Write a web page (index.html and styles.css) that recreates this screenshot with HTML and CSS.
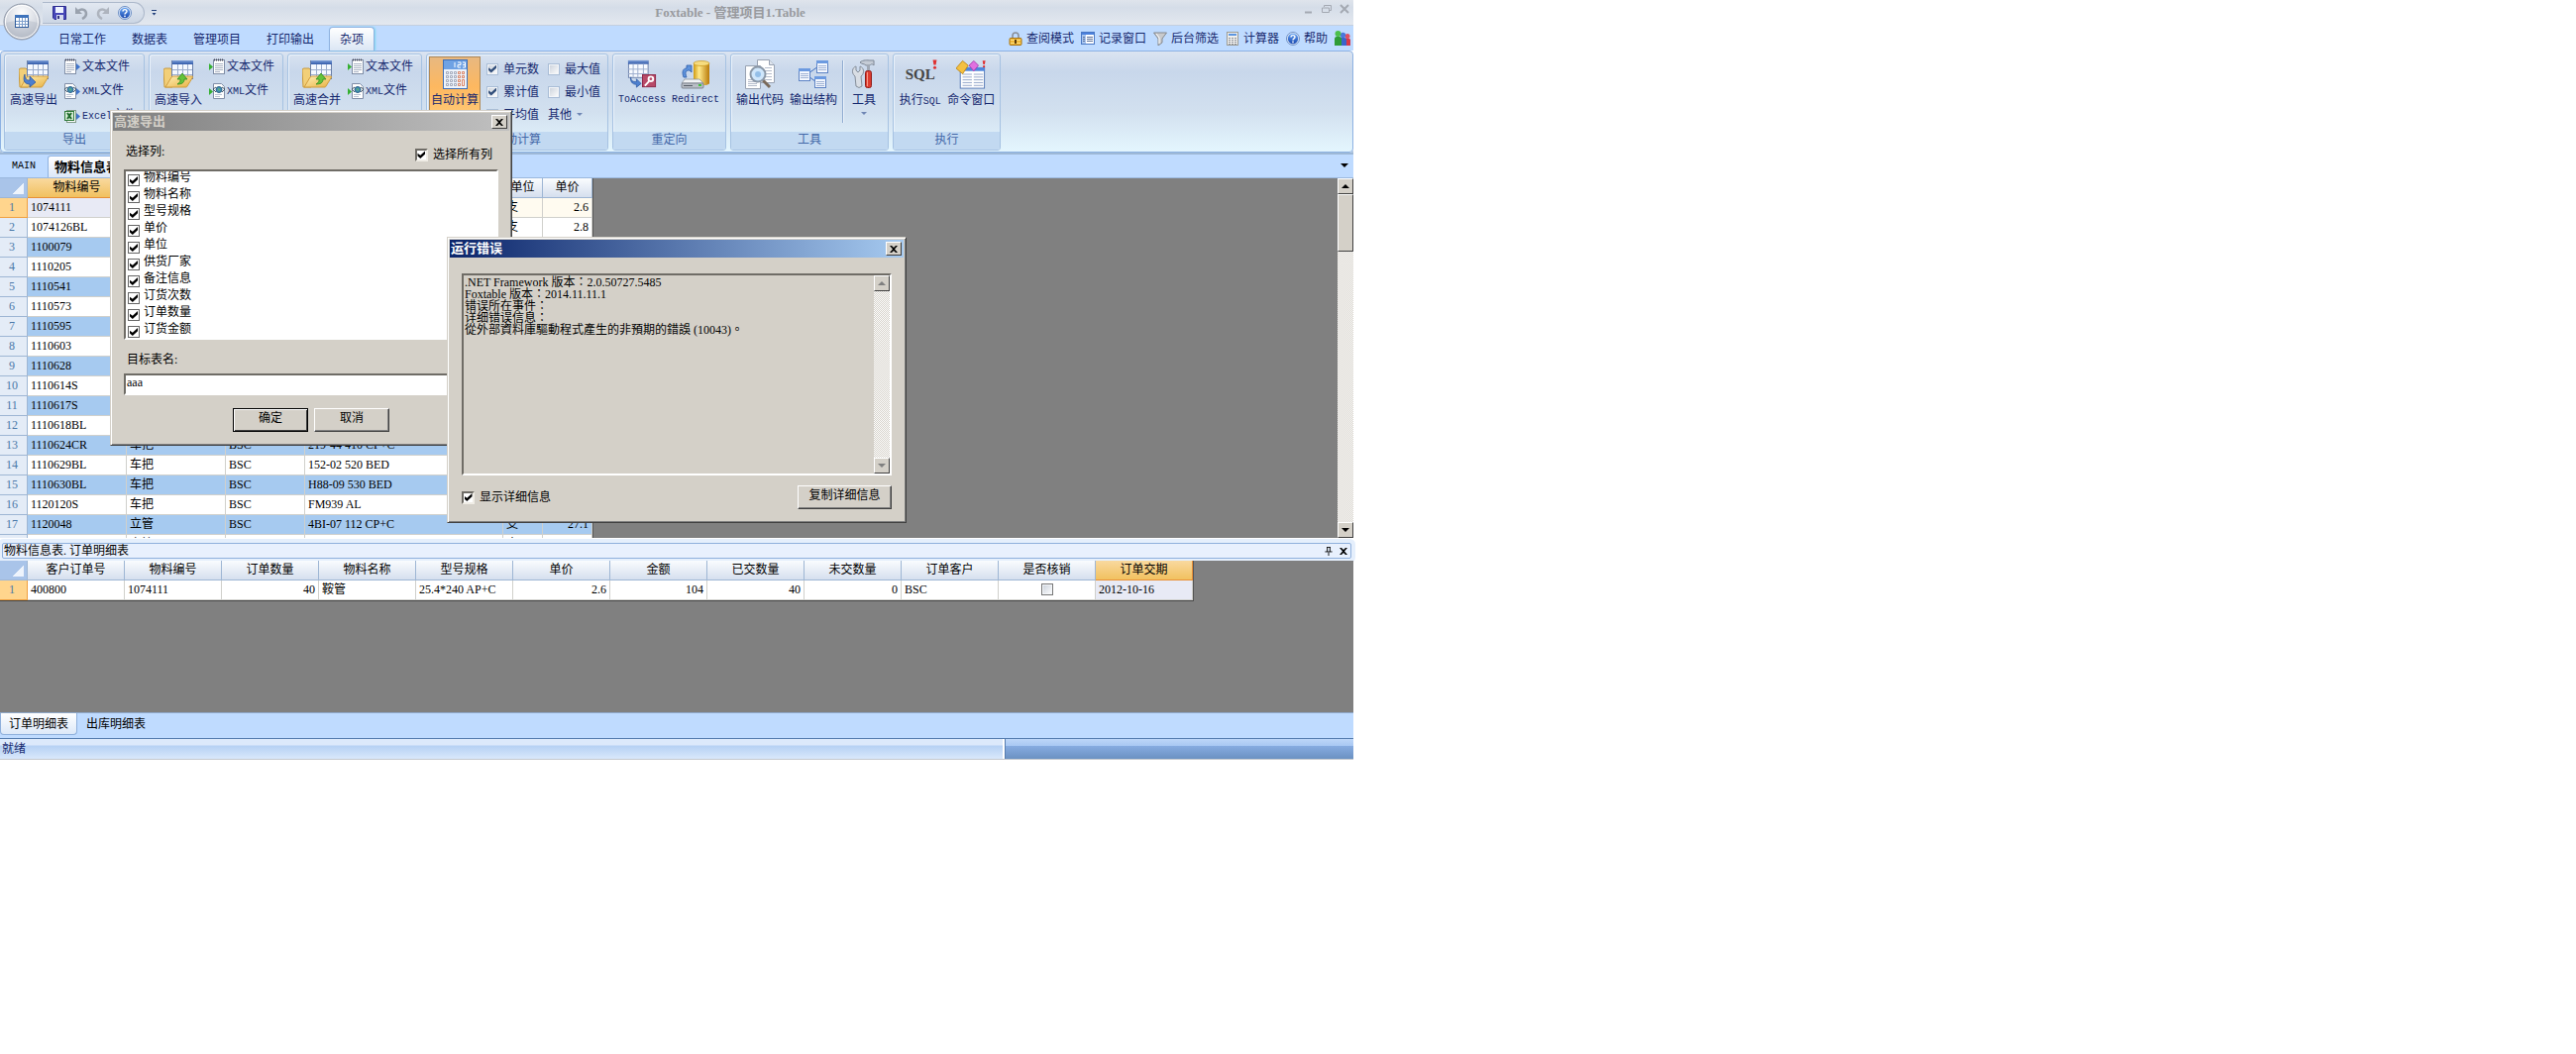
FILE: index.html
```html
<!DOCTYPE html>
<html lang="zh-CN">
<head>
<meta charset="utf-8">
<title>Foxtable - 管理项目1.Table</title>
<link rel="stylesheet" href="styles.css">
</head>
<body>
<svg class="defs" aria-hidden="true">
  <defs>
    <linearGradient id="g-blue" x2="0" y2="1"><stop offset="0" stop-color="#7d9fd8"/><stop offset="1" stop-color="#2f58a8"/></linearGradient>
    <linearGradient id="g-gold" x2="1" y2="1"><stop offset="0" stop-color="#fff0b8"/><stop offset="1" stop-color="#e8b040"/></linearGradient>
    <linearGradient id="g-cyl" x2="1" y2="0"><stop offset="0" stop-color="#d09a10"/><stop offset=".35" stop-color="#ffe98a"/><stop offset="1" stop-color="#b97a08"/></linearGradient>
    <radialGradient id="g-orb" cx=".5" cy=".25" r=".8"><stop offset="0" stop-color="#ffffff"/><stop offset=".6" stop-color="#d4d8e0"/><stop offset="1" stop-color="#a8aeba"/></radialGradient>
    <linearGradient id="g-help" x2="0" y2="1"><stop offset="0" stop-color="#6aa6f2"/><stop offset="1" stop-color="#1848b0"/></linearGradient>
  </defs>
  <symbol id="i-folder" viewBox="0 0 30 30">
    <path d="M0 11q0-2 2-2h5l2 2v17H1z" fill="#f2cf78" stroke="#c99a3c"/>
    <rect x="8.500" y="1.500" width="21" height="18" fill="#f4f8ff" stroke="#6a7fa8"/>
    <rect x="9" y="1" width="21" height="4" fill="url(#g-blue)"/>
    <path d="M9 10.500h20M9 15.500h20M14.500 5v14M19.500 5v14M24.500 5v14" stroke="#9aaccc"/>
    <path d="M2 28l6-10q1-1 2-1h19q1 0 .500 1L24 27q-.500 1-1 1z" fill="url(#g-gold)" stroke="#d09c3c"/>
  </symbol>
  <symbol id="i-out" viewBox="0 0 30 30"><use href="#i-folder"/><path d="M6 15c0 6 3 6 5 6v-4l6 6-6 5v-3c-6 0-7-5-5-10z" fill="#4d80cf" stroke="#234f9c" stroke-width=".7"/></symbol>
  <symbol id="i-in" viewBox="0 0 30 30"><use href="#i-folder"/><path d="M19 14l5 6h-3c0 4-3 5-7 5 3-2 3-3 3-5h-3z" fill="#63c23a" stroke="#2c8a1c" stroke-width=".8"/></symbol>
  <symbol id="i-note" viewBox="0 0 12 16"><rect x=".5" y="1.500" width="11" height="14" fill="#fff" stroke="#7f8da6"/><path d="M1 1.500h10" stroke="#445" stroke-width="2" stroke-dasharray="1 1"/><path d="M2 5.500h8M2 7.500h8M2 9.500h8M2 11.500h8M2 13.500h5" stroke="#a9b3c4"/></symbol>
  <symbol id="i-xdoc" viewBox="0 0 12 16"><path d="M.500.500h8l3 3v12H.500z" fill="#fff" stroke="#7f8da6"/><path d="M0 6l3-2M0 6l3 3M12 6l-3-2M12 6l-3 3" stroke="#456"/><circle cx="6" cy="6.500" r="3" fill="#3f8fb0" stroke="#2c5f88"/><path d="M5 5l2 1-1 2" fill="#6fc05a"/><path d="M2 11.500h7M2 13.500h5" stroke="#b9c2d2"/></symbol>
  <symbol id="i-xls" viewBox="0 0 12 16"><rect x="2.500" y="2.500" width="9" height="12" fill="#fff" stroke="#7f9a86"/><rect x=".5" y="3.500" width="9" height="9" fill="#d8ecd8" stroke="#2f7a3a"/><path d="M3 5l4 6M7 5l-4 6" stroke="#1f6b2c" stroke-width="2"/></symbol>
  <symbol id="i-nout" viewBox="0 0 16 16"><use href="#i-note" width="12" height="16"/><path d="M12 5l4 3.500-4 3.500z" fill="#3f74cc"/></symbol>
  <symbol id="i-xout" viewBox="0 0 16 16"><use href="#i-xdoc" width="12" height="16"/><path d="M12 5l4 3.500-4 3.500z" fill="#3f74cc"/></symbol>
  <symbol id="i-eout" viewBox="0 0 16 16"><use href="#i-xls" width="12" height="16"/><path d="M12 5l4 3.500-4 3.500z" fill="#3f74cc"/></symbol>
  <symbol id="i-nin" viewBox="0 0 16 16"><use href="#i-note" x="4" width="12" height="16"/><path d="M0 5l4 3.500-4 3.500z" fill="#35b030"/></symbol>
  <symbol id="i-xin" viewBox="0 0 16 16"><use href="#i-xdoc" x="4" width="12" height="16"/><path d="M0 5l4 3.500-4 3.500z" fill="#35b030"/></symbol>
  <symbol id="i-ein" viewBox="0 0 16 16"><use href="#i-xls" x="4" width="12" height="16"/><path d="M0 5l4 3.500-4 3.500z" fill="#35b030"/></symbol>
  <symbol id="i-calc" viewBox="0 0 30 30"><rect x="3.500" y=".5" width="24" height="29" fill="#eef4fc" stroke="#3e6fb8"/><rect x="4" y="1" width="23" height="9" fill="#6fa2e4"/><path d="M15 3v5M18 3h3v2.500h-3v2.500h3M23 3h2.500v5H23M23 5.500h2" stroke="#fff" fill="none"/><g fill="#fff" stroke="#8a93a8" stroke-width=".8"><path d="M6.500 12.500h2v2h-2zM10.500 12.500h2v2h-2zM14.500 12.500h2v2h-2zM6.500 16.500h2v2h-2zM10.500 16.500h2v2h-2zM14.500 16.500h2v2h-2zM6.500 20.500h2v2h-2zM10.500 20.500h2v2h-2zM14.500 20.500h2v2h-2zM6.500 24.500h2v2h-2zM10.500 24.500h2v2h-2zM14.500 24.500h2v2h-2z"/><path stroke="#d0643c" d="M18.500 12.500h2v2h-2zM22.500 12.500h2v2h-2zM18.500 16.500h2v2h-2zM22.500 16.500h2v2h-2zM18.500 20.500h2v2h-2zM18.500 24.500h2v2h-2zM22.500 20.500h2v6h-2z"/></g></symbol>
  <symbol id="i-access" viewBox="0 0 32 30"><rect x="1.500" y=".5" width="21" height="18" fill="#f7faff" stroke="#6a7fa8"/><rect x="1" y="0" width="22" height="4" fill="url(#g-blue)"/><path d="M1 9.500h21M1 14.500h21M6.500 4v14M11.500 4v14M17.500 4v14" stroke="#9aaccc"/><path d="M4 18c0 5 3 5 6 5v-3l5 5-5 4v-3c-5 0-7-4-6-8z" fill="#4d80cf" stroke="#234f9c" stroke-width=".7"/><rect x="16.500" y="15.500" width="14" height="13" fill="#b84a68" stroke="#8c2444"/><circle cx="25.500" cy="20" r="2.500" fill="none" stroke="#fff" stroke-width="2"/><path d="M23.500 22.500l-4.500 5" stroke="#fff" stroke-width="2"/></symbol>
  <symbol id="i-redir" viewBox="0 0 30 30"><path d="M13 4v20c0 3 16 3 16 0V4z" fill="url(#g-cyl)"/><ellipse cx="21" cy="4" rx="8" ry="2.500" fill="#f6dc80" stroke="#c99518" stroke-width=".7"/><path d="M3 18C1 13 2 9 6 9V6l5 0v7l-2-2c-4 0-5 2-3 7z" fill="#5e93dc" stroke="#2c5ca8" stroke-width=".8"/><path d="M4 20h15l4 4H1z" fill="#f2f4f6" stroke="#8d949c" stroke-width=".8"/><rect x="1" y="24" width="22" height="5" rx="1" fill="#b9bec6" stroke="#6d747e" stroke-width=".8"/><path d="M3 26.500h9" stroke="#555c66"/><rect x="18" y="25" width="3" height="2" fill="#3ec43a"/></symbol>
  <symbol id="i-code" viewBox="0 0 30 30"><path d="M12.500.500h12l5 5v18h-17z" fill="#fff" stroke="#98a2b2"/><path d="M24.500.500v5h5" fill="#dfe5ee" stroke="#98a2b2"/><path d="M.500 6.500h15v23H.500z" fill="#fff" stroke="#98a2b2"/><path d="M3 20.500h9M3 22.500h9M3 24.500h9M3 26.500h9M20 8.500h7M20 11.500h7M20 14.500h7M20 17.500h7M20 20.500h7" stroke="#b4bccb"/><path d="M18 21l7 7" stroke="#7a6a5a" stroke-width="3"/><circle cx="13" cy="15" r="7.500" fill="#cfe6fb" stroke="#8b98a8" stroke-width="2"/><circle cx="13" cy="15" r="3" fill="#94bfe8"/></symbol>
  <symbol id="i-struct" viewBox="0 0 30 30"><path d="M10 14L20 7M10 17l8 6" stroke="#3f6fc0"/><g fill="#f4f8ff" stroke="#5c82c4"><rect x=".5" y="9.500" width="11" height="12"/><rect x="18.500" y="1.500" width="11" height="12"/><rect x="16.500" y="17.500" width="11" height="11"/></g><path fill="#6c9ae0" d="M0 9h12v3H0zM18 1h12v3H18zM16 17h12v3H16z"/><path d="M2 14.500h8M2 16.500h8M2 18.500h8M20 6.500h8M20 8.500h8M20 10.500h8M18 22.500h8M18 24.500h8M18 26.500h8" stroke="#9fb2d4"/></symbol>
  <symbol id="i-tools" viewBox="0 0 24 30"><path d="M3 17c-4-3-3-9 1-10v4l2 2 2-2V7c4 1 5 7 1 10l1 10q-3 3-6 0z" fill="#d8dde4" stroke="#858e9a"/><path d="M8 3c3-3 8-2 10-2h4v5c-2-2-3-1-4 0h-4c-2-2-4-1-6-3z" fill="#c5ccd6" stroke="#7c8694"/><rect x="15" y="6" width="3" height="5" fill="#a0a8b4"/><rect x="13.500" y="11.500" width="6" height="17" rx="2" fill="#dc3c30" stroke="#8f1c18"/><path d="M15.500 13v14" stroke="#f89888"/></symbol>
  <symbol id="i-bang" viewBox="0 0 5 10"><path d="M.500.500h4l-1 5h-2z" fill="#e03030"/><circle cx="2.500" cy="8.300" r="1.500" fill="#e03030"/></symbol>
  <symbol id="i-cmd" viewBox="0 0 32 31"><rect x="4.500" y="8.500" width="26" height="22" fill="#fff" stroke="#5478b4"/><rect x="5" y="8" width="26" height="4" fill="#4f86dc"/><path d="M7 15.500h10M19 15.500h10M7 18.500h10M19 18.500h10M7 21.500h10M19 21.500h10M7 24.500h10M19 24.500h10M7 27.500h10M19 27.500h10" stroke="#8fa2c8"/><path d="M0 9l7-8 6 5-6 9z" fill="#f4c040" stroke="#c08a18"/><path d="M14 6l5-5 5 5-5 6z" fill="#e070e0" stroke="#a83cb0"/><use href="#i-bang" x="28" y="0" width="4" height="9"/></symbol>
  <symbol id="i-help" viewBox="0 0 14 14"><circle cx="7" cy="7" r="6.500" fill="#dfe9f8" stroke="#6c8fc4"/><circle cx="7" cy="7" r="5.200" fill="url(#g-help)"/><path d="M5 5.500C5 3 9 3 9 5.500 9 7 7 6.800 7 8.500" fill="none" stroke="#fff" stroke-width="1.400"/><circle cx="7" cy="10.300" r=".9" fill="#fff"/></symbol>
  <symbol id="i-save" viewBox="0 0 14 14"><path d="M.500.500h13v13H2l-1.500-1.500z" fill="#4848b8" stroke="#2c2c90"/><rect x="3" y="1" width="8" height="6" fill="#eef2ff"/><rect x="4" y="9" width="7" height="5" fill="#d4d8ee"/><rect x="5" y="10" width="2" height="3" fill="#333380"/></symbol>
  <symbol id="i-undo" viewBox="0 0 14 14"><path d="M4 5c4-3 8-1 8 3 0 2-2 4-4 5" fill="none" stroke="#9aa2ae" stroke-width="2.500"/><path d="M1 1v7h7z" fill="#9aa2ae"/></symbol>
  <symbol id="i-redo" viewBox="0 0 14 14"><path d="M10 5C6 2 2 4 2 8c0 2 2 4 4 5" fill="none" stroke="#aeb4be" stroke-width="2.500"/><path d="M13 1v7H6z" fill="#aeb4be"/></symbol>
  <symbol id="i-lock" viewBox="0 0 14 14"><path d="M4 7V4c0-4 6-4 6 0v3" fill="none" stroke="#8a8f98" stroke-width="1.600"/><rect x="1" y="6.500" width="12" height="7" rx="1" fill="#f0b838" stroke="#a87414"/><path d="M2 8.500h10M2 11.500h10" stroke="#fbdc80"/><path d="M7 8v4" stroke="#5a3a08" stroke-width="2"/></symbol>
  <symbol id="i-list" viewBox="0 0 14 14"><rect x=".5" y=".5" width="13" height="12" fill="#fff" stroke="#4a78c4"/><rect x="1" y="1" width="12" height="2" fill="#4a80dc"/><rect x="1" y="3" width="4" height="9" fill="#a9c6f0"/><path d="M2 5.500h2M2 7.500h2M2 9.500h2M6 5.500h6M6 7.500h6M6 9.500h6" stroke="#5a6f98"/></symbol>
  <symbol id="i-funnel" viewBox="0 0 14 14"><path d="M.500 1h13L9 7v4l-4 3V7z" fill="#c8cacd" stroke="#84888e"/><path d="M3 2l3 4v6" stroke="#fff" fill="none"/></symbol>
  <symbol id="i-scalc" viewBox="0 0 14 14"><rect x="1.500" y=".5" width="11" height="13" fill="#f0f0ee" stroke="#9a9a94"/><rect x="3" y="2" width="8" height="2" fill="#5c96e0"/><path d="M3 6.500h8M3 8.500h8M3 10.500h8M3 12.500h8" stroke="#8d9098" stroke-dasharray="2 1"/></symbol>
  <symbol id="i-people" viewBox="0 0 16 16"><path d="M10 15V9c0-2 5-2 6 0v6z" fill="#d83848"/><circle cx="13" cy="5.500" r="2.500" fill="#e05060"/><path d="M5 15V9c0-3 7-3 7 0v6z" fill="#3a64cc"/><circle cx="8.500" cy="4.500" r="2.700" fill="#4a78dc"/><path d="M0 15V8c0-3 7-3 7 0v7z" fill="#2f9c38"/><circle cx="3.500" cy="3" r="3" fill="#4cc04c"/></symbol>
  <symbol id="i-orb" viewBox="0 0 38 38"><circle cx="19" cy="19" r="18" fill="url(#g-orb)" stroke="#8f98a8"/><circle cx="19" cy="19" r="16.500" fill="none" stroke="#fff"/><path d="M3 20c10-3 22-3 32 0 0 18-32 18-32 0z" fill="#b4bac6" opacity=".45"/><rect x="12.500" y="12.500" width="13" height="12" fill="#fff" stroke="#2f5c9c"/><rect x="12" y="12" width="14" height="3" fill="#3f74bc"/><path d="M13 18.500h12M13 21.500h12M16.500 15v9M19.500 15v9M22.500 15v9" stroke="#7fa0cc"/></symbol>
  <symbol id="i-x" viewBox="0 0 8 7"><path d="M0 0h2l2 2 2-2h2L5 3.500 8 7H6L4 5 2 7H0l3-3.500z" fill="currentColor"/></symbol>
</svg>

<div class="app">
  <header class="titlebar">
    <button class="orb" aria-label="菜单"><svg><use href="#i-orb"/></svg></button>
    <div class="qat">
      <button aria-label="保存"><svg class="ic14"><use href="#i-save"/></svg></button>
      <button aria-label="撤销"><svg class="ic14"><use href="#i-undo"/></svg></button>
      <button aria-label="重做"><svg class="ic14"><use href="#i-redo"/></svg></button>
      <button aria-label="帮助"><svg class="ic14"><use href="#i-help"/></svg></button>
    </div>
    <span class="qat-more"></span>
    <h1>Foxtable - 管理项目1.Table</h1>
    <div class="winbtns">
      <button aria-label="最小化"><svg viewBox="0 0 10 10"><path d="M1 8.500h7" stroke="#a4a9b2" stroke-width="2"/></svg></button>
      <button aria-label="还原"><svg viewBox="0 0 10 10"><path d="M2.500 3V1.500h7v5H8M.500 4h7v4.500h-7z" fill="none" stroke="#a4a9b2"/></svg></button>
      <button aria-label="关闭"><svg viewBox="0 0 10 10"><path d="M1 1l8 8M9 1L1 9" stroke="#a4a9b2" stroke-width="2"/></svg></button>
    </div>
  </header>

  <div class="tabrow">
    <nav class="tabs">
      <button>日常工作</button><button>数据表</button><button>管理项目</button><button>打印输出</button><button class="on">杂项</button>
    </nav>
    <div class="quick">
      <button><svg class="ic14"><use href="#i-lock"/></svg>查阅模式</button>
      <button><svg class="ic14"><use href="#i-list"/></svg>记录窗口</button>
      <button><svg class="ic14"><use href="#i-funnel"/></svg>后台筛选</button>
      <button><svg class="ic14"><use href="#i-scalc"/></svg>计算器</button>
      <button><svg class="ic14"><use href="#i-help"/></svg>帮助</button>
      <button aria-label="用户"><svg class="ic16"><use href="#i-people"/></svg></button>
    </div>
  </div>

  <div class="ribbon">
    <section class="group">
      <div class="tools">
        <button class="big"><svg class="ic30"><use href="#i-out"/></svg>高速导出</button>
        <div class="stack">
          <button><svg class="ic16"><use href="#i-nout"/></svg>文本文件</button>
          <button><svg class="ic16"><use href="#i-xout"/></svg><span><span class="mono">XML</span>文件</span></button>
          <button><svg class="ic16"><use href="#i-eout"/></svg><span><span class="mono">Excel</span>文件</span></button>
        </div>
      </div>
      <h2>导出</h2>
    </section>
    <section class="group">
      <div class="tools">
        <button class="big"><svg class="ic30"><use href="#i-in"/></svg>高速导入</button>
        <div class="stack">
          <button><svg class="ic16"><use href="#i-nin"/></svg>文本文件</button>
          <button><svg class="ic16"><use href="#i-xin"/></svg><span><span class="mono">XML</span>文件</span></button>
          <button aria-label="Excel"><svg class="ic16"><use href="#i-ein"/></svg></button>
        </div>
      </div>
      <h2>导入</h2>
    </section>
    <section class="group">
      <div class="tools">
        <button class="big"><svg class="ic30"><use href="#i-in"/></svg>高速合并</button>
        <div class="stack">
          <button><svg class="ic16"><use href="#i-nin"/></svg>文本文件</button>
          <button><svg class="ic16"><use href="#i-xin"/></svg><span><span class="mono">XML</span>文件</span></button>
          <button aria-label="Excel"><svg class="ic16"><use href="#i-ein"/></svg></button>
        </div>
      </div>
      <h2>合并</h2>
    </section>
    <section class="group">
      <div class="tools">
        <button class="big pressed"><svg class="ic30"><use href="#i-calc"/></svg>自动计算</button>
        <div class="checks">
          <label><input type="checkbox" class="soft" checked>单元数</label>
          <label><input type="checkbox" class="soft">最大值</label>
          <label><input type="checkbox" class="soft" checked>累计值</label>
          <label><input type="checkbox" class="soft">最小值</label>
          <label><input type="checkbox" class="soft">平均值</label>
          <button class="other">其他<span class="tri"></span></button>
        </div>
      </div>
      <h2>自动计算</h2>
    </section>
    <section class="group">
      <div class="tools">
        <button class="big"><svg class="ic30"><use href="#i-access"/></svg><span class="mono">ToAccess</span></button>
        <button class="big"><svg class="ic30"><use href="#i-redir"/></svg><span class="mono">Redirect</span></button>
      </div>
      <h2>重定向</h2>
    </section>
    <section class="group">
      <div class="tools">
        <button class="big"><svg class="ic30"><use href="#i-code"/></svg>输出代码</button>
        <button class="big"><svg class="ic30"><use href="#i-struct"/></svg>输出结构</button>
        <span class="vsep"></span>
        <button class="big narrow"><svg class="ic30"><use href="#i-tools"/></svg>工具<span class="tri"></span></button>
      </div>
      <h2>工具</h2>
    </section>
    <section class="group">
      <div class="tools">
        <button class="big sqlbtn"><span class="sql">SQL<svg><use href="#i-bang"/></svg></span><span>执行<span class="mono">SQL</span></span></button>
        <button class="big"><svg class="ic30"><use href="#i-cmd"/></svg>命令窗口</button>
      </div>
      <h2>执行</h2>
    </section>
  </div>

  <nav class="sheets">
    <button class="mono">MAIN</button><button class="on">物料信息表</button><span class="tri dark"></span>
  </nav>

  <main class="gridarea">
    <table class="grid main-grid">
      <colgroup><col class="c-num"><col class="c100"><col class="c100"><col class="c80"><col class="c200"><col class="c40"><col class="c50"></colgroup>
      <thead><tr><th class="corner"></th><th class="sel">物料编号</th><th>物料名称</th><th>供货厂家</th><th>型号规格</th><th>单位</th><th>单价</th></tr></thead>
      <tbody>
        <tr class="cur"><th>1</th><td>1074111</td><td></td><td></td><td></td><td>支</td><td class="r">2.6</td></tr>
        <tr><th>2</th><td>1074126BL</td><td></td><td></td><td></td><td>支</td><td class="r">2.8</td></tr>
        <tr><th>3</th><td>1100079</td><td></td><td></td><td></td><td></td><td></td></tr>
        <tr><th>4</th><td>1110205</td><td></td><td></td><td></td><td></td><td></td></tr>
        <tr><th>5</th><td>1110541</td><td></td><td></td><td></td><td></td><td></td></tr>
        <tr><th>6</th><td>1110573</td><td></td><td></td><td></td><td></td><td></td></tr>
        <tr><th>7</th><td>1110595</td><td></td><td></td><td></td><td></td><td></td></tr>
        <tr><th>8</th><td>1110603</td><td></td><td></td><td></td><td></td><td></td></tr>
        <tr><th>9</th><td>1110628</td><td></td><td></td><td></td><td></td><td></td></tr>
        <tr><th>10</th><td>1110614S</td><td></td><td></td><td></td><td></td><td></td></tr>
        <tr><th>11</th><td>1110617S</td><td></td><td></td><td></td><td></td><td></td></tr>
        <tr><th>12</th><td>1110618BL</td><td></td><td></td><td></td><td></td><td></td></tr>
        <tr><th>13</th><td>1110624CR</td><td>车把</td><td>BSC</td><td>219-44 410 CP+C</td><td></td><td></td></tr>
        <tr><th>14</th><td>1110629BL</td><td>车把</td><td>BSC</td><td>152-02 520 BED</td><td></td><td></td></tr>
        <tr><th>15</th><td>1110630BL</td><td>车把</td><td>BSC</td><td>H88-09 530 BED</td><td></td><td></td></tr>
        <tr><th>16</th><td>1120120S</td><td>车把</td><td>BSC</td><td>FM939 AL</td><td></td><td></td></tr>
        <tr><th>17</th><td>1120048</td><td>立管</td><td>BSC</td><td>4BI-07 112 CP+C</td><td>支</td><td class="r">27.1</td></tr>
        <tr><th></th><td></td><td>立管</td><td></td><td></td><td>支</td><td></td></tr>
      </tbody>
    </table>
    <div class="vscroll"><button aria-label="向上"><span class="tri up"></span></button><span class="thumb"></span><button class="end" aria-label="向下"><span class="tri dark"></span></button></div>
  </main>

  <div class="pane-head">
    <span>物料信息表. 订单明细表</span>
    <span class="pane-btns">
      <button aria-label="固定"><svg viewBox="0 0 8 10"><path d="M2.500 0v5.500M5.500 0v5.500M2 .500h4M0 5.500h8M4 6v4" fill="none" stroke="#000"/></svg></button>
      <button aria-label="关闭"><svg><use href="#i-x"/></svg></button>
    </span>
  </div>

  <section class="detail">
    <table class="grid">
      <colgroup><col class="c-num"><col class="c98" span="12"></colgroup>
      <thead><tr><th class="corner"></th><th>客户订单号</th><th>物料编号</th><th>订单数量</th><th>物料名称</th><th>型号规格</th><th>单价</th><th>金额</th><th>已交数量</th><th>未交数量</th><th>订单客户</th><th>是否核销</th><th class="sel">订单交期</th></tr></thead>
      <tbody><tr class="one"><th>1</th><td>400800</td><td>1074111</td><td class="r">40</td><td>鞍管</td><td>25.4*240 AP+C</td><td class="r">2.6</td><td class="r">104</td><td class="r">40</td><td class="r">0</td><td>BSC</td><td class="c"><input type="checkbox" class="soft" aria-label="是否核销"></td><td class="pick">2012-10-16</td></tr></tbody>
    </table>
  </section>

  <nav class="subtabs"><button class="on">订单明细表</button><button>出库明细表</button></nav>
  <footer class="status"><span class="ready">就绪</span><span class="rest"></span></footer>

  <section class="dialog export" aria-label="高速导出">
    <div class="dlg-title">高速导出<button aria-label="关闭"><svg><use href="#i-x"/></svg></button></div>
    <div class="dlg-body">
      <div class="pick-head"><span>选择列:</span><label><input type="checkbox" class="classic" checked>选择所有列</label></div>
      <div class="listbox">
        <label><input type="checkbox" class="flat" checked>物料编号</label>
        <label><input type="checkbox" class="flat" checked>物料名称</label>
        <label><input type="checkbox" class="flat" checked>型号规格</label>
        <label><input type="checkbox" class="flat" checked>单价</label>
        <label><input type="checkbox" class="flat" checked>单位</label>
        <label><input type="checkbox" class="flat" checked>供货厂家</label>
        <label><input type="checkbox" class="flat" checked>备注信息</label>
        <label><input type="checkbox" class="flat" checked>订货次数</label>
        <label><input type="checkbox" class="flat" checked>订单数量</label>
        <label><input type="checkbox" class="flat" checked>订货金额</label>
      </div>
      <label class="target" for="target">目标表名:</label>
      <input id="target" class="field" type="text" value="aaa">
      <div class="actions"><button class="btn default">确定</button><button class="btn">取消</button></div>
    </div>
  </section>

  <section class="dialog error" aria-label="运行错误">
    <div class="dlg-title">运行错误<button aria-label="关闭"><svg><use href="#i-x"/></svg></button></div>
    <div class="dlg-body">
      <div class="log">
        <p lang="zh-TW">.NET Framework 版本：2.0.50727.5485<br>Foxtable 版本：2014.11.11.1<br>错误所在事件：<br>详细错误信息：<br>從外部資料庫驅動程式產生的非預期的錯誤 (10043)。</p>
        <div class="vscroll off"><button aria-label="向上"><span class="tri up"></span></button><button class="end" aria-label="向下"><span class="tri"></span></button></div>
      </div>
      <div class="foot"><label><input type="checkbox" class="classic" checked>显示详细信息</label><button class="btn wide">复制详细信息</button></div>
    </div>
  </section>
</div>
</body>
</html>
```
FILE: styles.css
```css
* { box-sizing: border-box; }
body {
  margin: 0;
  background: #fff;
  color: #000;
  font: 12px/16px "Liberation Serif", "Noto Sans CJK SC", serif;
}
.defs { position: absolute; width: 0; height: 0; }
button, input { font: inherit; color: inherit; }
button { background: none; border: 0; padding: 0; white-space: nowrap; }
h1, h2, p { margin: 0; font-size: 12px; font-weight: normal; }
svg { display: block; flex: none; }
.mono { font-family: "Liberation Mono", "Noto Sans CJK SC", monospace; font-size: 10px; }
.ic14 { width: 14px; height: 14px; }
.ic16 { width: 16px; height: 16px; }
.ic30 { width: 30px; height: 30px; }
.tri { width: 0; height: 0; border: 3px solid transparent; border-bottom-width: 0; border-top-color: #6f86b4; }
.tri.dark { border-top-color: #000; }
.tri.up { border-bottom: 3px solid #000; border-top-width: 0; }

.app { position: relative; width: 100%; max-width: 1366px; }

/* title bar */
.titlebar {
  position: relative;
  display: flex;
  align-items: center;
  height: 26px;
  padding: 0 4px 0 43px;
  background: linear-gradient(#dfe4ec, #d5dde8 30%, #e3e8ef);
  border-bottom: 1px solid #c3cfdf;
}
.orb { position: absolute; left: 3px; top: 3px; z-index: 2; }
.orb svg { width: 38px; height: 38px; }
.qat {
  display: flex;
  gap: 8px;
  height: 22px;
  padding: 3px 12px 3px 10px;
  background: linear-gradient(#e2e8f1, #ccd6e4);
  border: 1px solid #adb9cb;
  border-left: 0;
  border-radius: 0 11px 11px 0;
}
.qat-more { width: 5px; height: 6px; margin-left: 7px; background: linear-gradient(#22407c 1px, #0000 1px 3px, #22407c 3px); clip-path: polygon(0 0, 100% 0, 100% 50%, 50% 100%, 0 50%); }
.titlebar h1 { flex: 1; text-align: center; font-size: 13px; font-weight: bold; color: #989a9e; }
.winbtns { display: flex; gap: 8px; padding-bottom: 8px; }
.winbtns svg { width: 10px; height: 10px; }

/* ribbon tabs */
.tabrow { display: flex; justify-content: space-between; height: 25px; padding: 1px 3px 0 48px; background: #bfdbff; color: #15286e; }
.tabs { display: flex; gap: 4px; }
.tabs button { padding: 0 10px; border: 1px solid transparent; border-bottom: 0; }
.tabs .on { background: linear-gradient(#fff, #dbe6f4); border-color: #8fb2e0; border-radius: 4px 4px 0 0; box-shadow: 1px 0 2px #7fd8f0; }
.quick { display: flex; gap: 7px; align-items: center; }
.quick button { display: flex; gap: 4px; align-items: center; }

/* ribbon */
.ribbon {
  display: grid;
  grid-template-columns: 142px 136px 136px 184px 115px 160px 109px;
  gap: 4px;
  height: 103px;
  padding: 2px 3px 1px;
  border: 1px solid #8db2e3;
  border-radius: 4px;
  background: linear-gradient(#dbe4f1, #c8d7eb 20%, #d2e0ef 60%, #e4f6fe);
  box-shadow: 0 2px 0 #9db8d6;
  color: #15286e;
}
.group { display: flex; flex-direction: column; border: 1px solid #a6c2e2; border-radius: 3px; overflow: hidden; box-shadow: inset 1px 1px 0 #eaf2fb; }
.group h2 { height: 18px; line-height: 16px; text-align: center; background: #c2d9f1; color: #4468a8; }
.tools { flex: 1; display: flex; padding: 2px 2px 0 2px; }
.big { display: flex; flex-direction: column; align-items: center; width: 54px; padding-top: 3px; gap: 3px; }
.big.narrow { width: 36px; }
.big .tri { margin-top: 1px; }
.big.pressed { width: 53px; border: 1px solid #b08a58; background: linear-gradient(#e8b880, #fdb860 40%, #ffd080); padding-top: 2px; }
.stack { display: flex; flex-direction: column; gap: 9px; padding: 2px 0 0 4px; }
.stack button { display: flex; gap: 2px; align-items: center; height: 16px; }
.checks { display: grid; grid-template-columns: 62px 58px; grid-template-rows: 23px 23px 23px; padding: 1px 0 0 6px; align-items: center; }
.checks label { display: flex; gap: 5px; align-items: center; white-space: nowrap; }
.other { display: flex; align-items: center; gap: 5px; }
.vsep { width: 2px; height: 63px; margin: 4px 2px 0; border-left: 1px solid #8fabd0; border-right: 1px solid #edf4fc; }
.sqlbtn { width: 50px; }
.sql { position: relative; width: 30px; height: 30px; line-height: 30px; font-size: 15px; font-weight: bold; color: #444; }
.sql svg { position: absolute; right: -2px; top: 0; width: 5px; height: 10px; }

/* check boxes */
input[type="checkbox"] { appearance: none; flex: none; display: grid; place-items: center; margin: 0; width: 12px; height: 12px; background: #fff; }
input[type="checkbox"]:checked::before { content: ""; width: 8px; height: 8px; background: #000; clip-path: polygon(0 35%, 0 70%, 35% 100%, 100% 40%, 100% 0, 35% 60%); }
input.soft { border: 1px solid #a9bdd6; background: linear-gradient(135deg, #c9d0da, #fff); box-shadow: inset 0 0 0 1px #f4f6f9; }
input.soft:checked::before { background: #33507c; }
td input.soft { margin: 0 auto; border-color: #777; }
input.classic { border: 2px solid; border-color: #6f6c66 #f0ede6 #f0ede6 #6f6c66; width: 13px; height: 13px; }
input.flat { border: 1px solid #666; }

/* sheet tabs */
.sheets { display: flex; align-items: flex-end; height: 26px; padding-right: 5px; border-bottom: 1px solid #9ab8de; background: #bfdbff; }
.ribbon + .sheets { background: linear-gradient(#9db8d6 2px, #bfdbff 2px); }
.sheets button { height: 22px; width: 48px; }
.sheets .on { width: 78px; padding-left: 6px; text-align: left; font-size: 13px; font-weight: bold; border: 1px solid #8fb2e0; border-bottom: 0; border-radius: 3px 3px 0 0; background: linear-gradient(#fff, #dce8f8); }
.sheets .tri { margin: 0 0 10px auto; border-width: 4px 4px 0; }

/* grids */
.gridarea { display: flex; align-items: flex-start; justify-content: space-between; height: 363px; overflow: hidden; background: #808080; }
.detail { height: 153px; background: #808080; }
.grid { table-layout: fixed; width: 0; border-collapse: separate; border-spacing: 0; border-right: 1px solid #555; border-bottom: 1px solid #444; }
.c-num { width: 28px; } .c40 { width: 40px; } .c50 { width: 50px; } .c80 { width: 80px; } .c98 { width: 98px; } .c100 { width: 100px; } .c200 { width: 200px; }
.grid th, .grid td { height: 20px; padding: 0 3px 1px; line-height: 16px; font-weight: normal; white-space: nowrap; overflow: hidden; }
.grid td { background: #fff; text-align: left; border-right: 1px solid #d0d0cc; border-bottom: 1px solid #d0d0cc; }
.main-grid tr:nth-child(odd) td { background: #a6caf0; }
.main-grid .cur td:nth-child(n) { background: #fffbf0; }
.main-grid .cur td:nth-child(2) { background: #e8eaf5; }
.grid .r { text-align: right; }
.grid thead th { background: linear-gradient(#fafcfe, #d5dfee); border-right: 1px solid #9eb6d4; border-bottom: 1px solid #9eb6d4; }
.grid thead .sel { background: linear-gradient(#f9d99f, #f1c15f); border-color: #e89038; }
.grid thead .corner { background: linear-gradient(135deg, #a9c4e9 50%, #eef4fc 50%) 13px 4px / 11px 12px no-repeat, #a9c4e9; }
.grid tbody th { padding-right: 6px; color: #4a78a8; background: #e4ecf7; border-right: 1px solid #9eb6d4; border-bottom: 1px solid #9eb6d4; }
.grid .cur th, .grid .one th { background: #ffd58d; border-color: #f0a040; }
.grid .pick { background: #e8eaf5; }

/* scroll bars */
.vscroll { display: flex; flex-direction: column; align-self: stretch; width: 16px; background: repeating-conic-gradient(#fff 0 25%, #d4d0c8 0 50%) 0 0 / 2px 2px; }
.vscroll button, .thumb { display: flex; align-items: center; justify-content: center; height: 16px; background: #d4d0c8; border: 1px solid; border-color: #fff #404040 #404040 #fff; }
.vscroll .thumb { height: 58px; }
.vscroll .tri { border-left-width: 4px; border-right-width: 4px; }
.vscroll .tri.up { border-bottom-width: 4px; }
.vscroll .tri:not(.up) { border-top-width: 4px; }
.vscroll .end { margin-top: auto; }
.off .tri { border-top-color: #808080; }
.off .tri.up { border-bottom-color: #808080; }

/* lower pane */
.pane-head { display: flex; justify-content: space-between; align-items: center; height: 16px; margin: 5px 2px 2px; padding: 0 3px 0 1px; border: 1px solid #8fb0dc; border-radius: 2px; background: #e8f0fd; box-shadow: 0 0 0 4px #e5effc; line-height: 14px; }
.pane-btns { display: flex; gap: 7px; }
.pane-btns svg { width: 8px; height: 9px; }
.detail { position: relative; }
.subtabs { display: flex; height: 26px; background: #bfdbff; border-top: 1px solid #8fa8c8; }
.subtabs button { height: 22px; padding: 0 9px; }
.subtabs .on { padding: 0 8px; border: 1px solid #8fb0dc; border-top: 0; border-radius: 0 0 4px 4px; background: linear-gradient(#fff, #dce8f8); }
.status { display: flex; height: 22px; border-top: 1px solid #567db0; border-bottom: 1px solid #c4c8ce; color: #15286e; line-height: 20px; }
.ready { flex: 1; padding-left: 2px; background: linear-gradient(#dce9fb 30%, #b6d1f4 35%, #d9e8fb); border-right: 2px solid #fff; }
.rest { flex: 0 1 352px; border-left: 1px solid #567db0; background: linear-gradient(#bdd6f8, #a9c8f3 34%, #86abe0 36%, #6b91c2); }

/* dialogs */
.dialog { position: absolute; z-index: 3; padding: 2px; background: #d4d0c8; border: 1px solid; border-color: #d4d0c8 #404040 #404040 #d4d0c8; box-shadow: inset 1px 1px 0 #fff, inset -1px -1px 0 #808080; }
.dlg-title { display: flex; justify-content: space-between; align-items: center; height: 18px; padding: 0 2px 0 1px; font-size: 13px; font-weight: bold; color: #d4d0c8; background: linear-gradient(90deg, #808080, #c0c0c0); }
.dlg-title button { display: grid; place-items: center; width: 16px; height: 14px; color: #000; background: #d4d0c8; border: 1px solid; border-color: #fff #404040 #404040 #fff; }
.dlg-title svg { width: 8px; height: 7px; }
.export { left: 111px; top: 111px; width: 406px; height: 339px; }
.export .dlg-body { padding: 13px 11px 0; }
.pick-head { display: flex; justify-content: space-between; height: 26px; padding: 0 6px 0 2px; }
.pick-head label { padding-top: 2px; align-items: center; height: 20px; }
.pick-head label, .foot label { display: flex; gap: 5px; }
.listbox { height: 172px; padding: 1px 2px; overflow: hidden; background: #fff; border: 2px solid; border-color: #6f6c66 #fff #fff #6f6c66; }
.listbox label { display: flex; gap: 4px; height: 17px; line-height: 10px; }
.listbox input { margin-top: 2px; }
.target { display: block; padding: 12px 0 6px 3px; }
.field { display: block; width: 100%; height: 22px; padding: 0 1px 3px; border: 2px solid; border-color: #6f6c66 #fff #fff #6f6c66; background: #fff; }
.actions { display: flex; gap: 6px; justify-content: center; padding: 13px 0 0 0; }
.btn { width: 76px; height: 24px; padding-bottom: 5px; background: #d4d0c8; border: 1px solid; border-color: #fff #404040 #404040 #fff; box-shadow: inset -1px -1px 0 #808080; }
.btn.default { outline: 1px solid #000; outline-offset: -1px; border-color: #000; box-shadow: inset 1px 1px 0 #fff, inset -1px -1px 0 #404040; }
.btn.wide { width: 95px; }
.error { left: 451px; top: 239px; width: 464px; height: 289px; }
.error .dlg-title { color: #fff; background: linear-gradient(90deg, #0a246a, #a6caf0); }
.error .dlg-body { padding: 16px 12px 0; }
.log { display: flex; justify-content: space-between; height: 204px; border: 2px solid; border-color: #6f6c66 #fff #fff #6f6c66; }
.log p { padding: 1px 1px; line-height: 12px; font-family: "Liberation Serif", "Noto Sans CJK TC", serif; }
.foot { display: flex; justify-content: space-between; align-items: center; padding-top: 10px; }
.foot label { align-items: center; }
```
